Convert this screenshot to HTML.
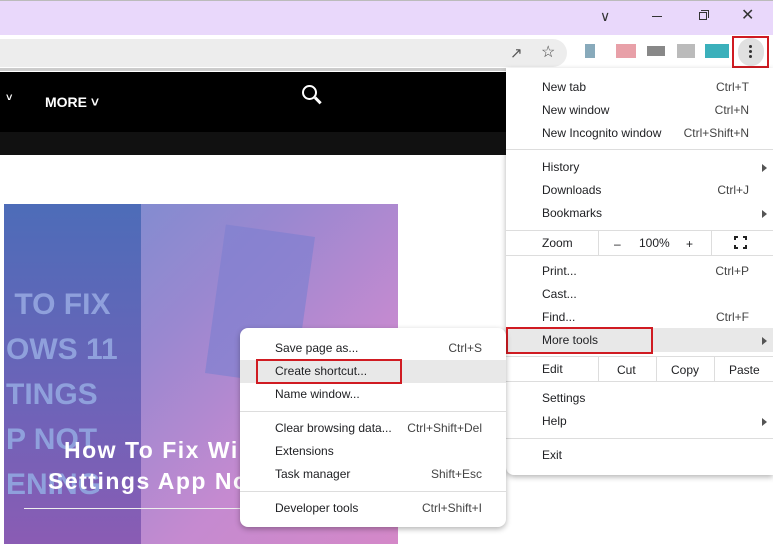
<!DOCTYPE html>
<html><head><style>
*{margin:0;padding:0;box-sizing:border-box}
body{width:773px;height:544px;overflow:hidden;position:relative;background:#fff;font-family:"Liberation Sans",sans-serif;font-size:12px;color:#202124}
.a{position:absolute}
.mi{position:absolute;left:36px;right:0;height:23px;line-height:23px}
.sc{position:absolute;right:24px;top:0;color:#444}
.ar{position:absolute;right:6px;top:8px;width:0;height:0;border-left:5px solid #555;border-top:4px solid transparent;border-bottom:4px solid transparent}
.sep{position:absolute;left:0;right:0;height:1px;background:#ddd}
</style></head><body>
<div class="a" style="left:0;top:0;width:773px;height:35px;background:#e9d8fb;border-top:1px solid #bbb"></div>
<div class="a" style="left:600px;top:8px;font-size:14px;color:#333">&#8744;</div>
<div class="a" style="left:652px;top:16px;width:10px;height:1px;background:#333"></div>
<div class="a" style="left:699px;top:12px;width:8px;height:8px;border:1px solid #333"></div>
<div class="a" style="left:701px;top:10px;width:8px;height:8px;border-top:1px solid #333;border-right:1px solid #333"></div>
<div class="a" style="left:741px;top:5px;font-size:16px;color:#333">&#10005;</div>
<div class="a" style="left:0;top:39px;width:567px;height:28px;background:#ededed;border-radius:0 14px 14px 0"></div>
<div class="a" style="left:510px;top:44px;font-size:15px;color:#555">&#8599;</div>
<div class="a" style="left:541px;top:42px;font-size:16px;color:#444">&#9734;</div>
<div class="a" style="left:585px;top:44px;width:10px;height:14px;background:#8ab"></div>
<div class="a" style="left:616px;top:44px;width:20px;height:14px;background:#e8a0a8"></div>
<div class="a" style="left:647px;top:46px;width:18px;height:10px;background:#888"></div>
<div class="a" style="left:677px;top:44px;width:18px;height:14px;background:#bbb"></div>
<div class="a" style="left:705px;top:44px;width:24px;height:14px;background:#3bb0bb"></div>
<div class="a" style="left:738px;top:38px;width:26px;height:28px;border-radius:13px;background:#e0e0e0"></div>
<div class="a" style="left:749px;top:45px;width:3px;height:3px;background:#333;border-radius:2px;box-shadow:0 5px 0 #333,0 10px 0 #333"></div>
<div class="a" style="left:732px;top:36px;width:37px;height:32px;border:2px solid #d01b22"></div>
<div class="a" style="left:0;top:68px;width:506px;height:476px;border-top:3px solid #ccc"></div>
<div class="a" style="left:0;top:72px;width:506px;height:60px;background:#000"></div>
<div class="a" style="left:0;top:132px;width:506px;height:23px;background:#111"></div>
<div class="a" style="left:6px;top:92px;color:#fff;font-weight:bold;font-size:11px">&#709;</div>
<div class="a" style="left:45px;top:94px;color:#fff;font-weight:bold;font-size:14px">MORE &#709;</div>
<div class="a" style="left:302px;top:85px;width:15px;height:15px;border:2.5px solid #fff;border-radius:50%"></div>
<div class="a" style="left:314px;top:99px;width:8px;height:2.5px;background:#fff;transform:rotate(45deg)"></div>
<div class="a" style="left:4px;top:204px;width:394px;height:340px;background:linear-gradient(135deg,#6f8fd0 0%,#9a88d0 40%,#c58ad0 70%,#d488c8 100%)"></div>
<div class="a" style="left:4px;top:204px;width:137px;height:340px;background:linear-gradient(180deg,#4d6cb8,#6e63b8 60%,#8a5cb4)"></div>
<div class="a" style="left:215px;top:230px;width:90px;height:150px;background:#8080d0;opacity:.7;transform:rotate(8deg)"></div>
<div class="a" style="left:6px;top:282px;color:#8fa0dc;font-weight:bold;font-size:30px;line-height:45px;white-space:nowrap;width:135px;overflow:hidden">&nbsp;TO FIX<br>OWS 11<br>TINGS<br>P NOT<br>ENING</div>
<div class="a" style="left:64px;top:437px;color:#fff;font-weight:bold;font-size:23px;letter-spacing:1.5px;white-space:nowrap">How To Fix Win</div>
<div class="a" style="left:48px;top:468px;color:#fff;font-weight:bold;font-size:23px;letter-spacing:1.5px;white-space:nowrap">Settings App No</div>
<div class="a" style="left:24px;top:508px;width:220px;height:1px;background:#eee"></div>

<div class="a" style="left:506px;top:68px;width:267px;height:407px;background:#fff;border-radius:0 0 0 8px;box-shadow:0 2px 6px rgba(0,0,0,.3)">
<div class="mi" style="top:8px">New tab<span class="sc">Ctrl+T</span></div>
<div class="mi" style="top:31px">New window<span class="sc">Ctrl+N</span></div>
<div class="mi" style="top:54px">New Incognito window<span class="sc">Ctrl+Shift+N</span></div>
<div class="sep" style="top:81px"></div>
<div class="mi" style="top:88px">History<span class="ar"></span></div>
<div class="mi" style="top:111px">Downloads<span class="sc">Ctrl+J</span></div>
<div class="mi" style="top:134px">Bookmarks<span class="ar"></span></div>
<div class="sep" style="top:162px"></div>
<div class="mi" style="top:164px">Zoom</div>
<div class="a" style="left:92px;top:162px;width:1px;height:25px;background:#ddd"></div>
<div class="a" style="left:205px;top:162px;width:1px;height:25px;background:#ddd"></div>
<div class="a" style="left:108px;top:169px">&#8211;</div>
<div class="a" style="left:133px;top:168px">100%</div>
<div class="a" style="left:180px;top:169px">+</div>
<div class="a" style="left:228px;top:168px;width:13px;height:13px;border:2px solid #222"></div>
<div class="a" style="left:226px;top:172px;width:17px;height:5px;background:#fff"></div>
<div class="a" style="left:232px;top:166px;width:5px;height:17px;background:#fff"></div>
<div class="sep" style="top:187px"></div>
<div class="mi" style="top:192px">Print...<span class="sc">Ctrl+P</span></div>
<div class="mi" style="top:215px">Cast...</div>
<div class="mi" style="top:238px">Find...<span class="sc">Ctrl+F</span></div>
<div class="a" style="left:0;top:260px;width:267px;height:24px;background:#e8e8e8"></div>
<div class="mi" style="top:261px">More tools<span class="ar"></span></div>
<div class="a" style="left:0;top:259px;width:147px;height:27px;border:2px solid #d01b22"></div>
<div class="sep" style="top:288px"></div>
<div class="mi" style="top:290px">Edit</div>
<div class="a" style="left:92px;top:288px;width:1px;height:25px;background:#ddd"></div>
<div class="a" style="left:150px;top:288px;width:1px;height:25px;background:#ddd"></div>
<div class="a" style="left:208px;top:288px;width:1px;height:25px;background:#ddd"></div>
<div class="a" style="left:111px;top:295px">Cut</div>
<div class="a" style="left:165px;top:295px">Copy</div>
<div class="a" style="left:223px;top:295px">Paste</div>
<div class="sep" style="top:313px"></div>
<div class="mi" style="top:319px">Settings</div>
<div class="mi" style="top:342px">Help<span class="ar"></span></div>
<div class="sep" style="top:370px"></div>
<div class="mi" style="top:376px">Exit</div>
</div>

<div class="a" style="left:240px;top:328px;width:266px;height:199px;background:#fff;border-radius:8px;box-shadow:0 2px 6px rgba(0,0,0,.3)">
<div class="mi" style="top:9px;left:35px">Save page as...<span class="sc">Ctrl+S</span></div>
<div class="a" style="left:0;top:32px;width:266px;height:23px;background:#e8e8e8"></div>
<div class="mi" style="top:32px;left:35px">Create shortcut...</div>
<div class="a" style="left:16px;top:31px;width:146px;height:25px;border:2px solid #d01b22"></div>
<div class="mi" style="top:55px;left:35px">Name window...</div>
<div class="sep" style="top:83px"></div>
<div class="mi" style="top:89px;left:35px">Clear browsing data...<span class="sc">Ctrl+Shift+Del</span></div>
<div class="mi" style="top:112px;left:35px">Extensions</div>
<div class="mi" style="top:135px;left:35px">Task manager<span class="sc">Shift+Esc</span></div>
<div class="sep" style="top:163px"></div>
<div class="mi" style="top:169px;left:35px">Developer tools<span class="sc">Ctrl+Shift+I</span></div>
</div>
</body></html>
